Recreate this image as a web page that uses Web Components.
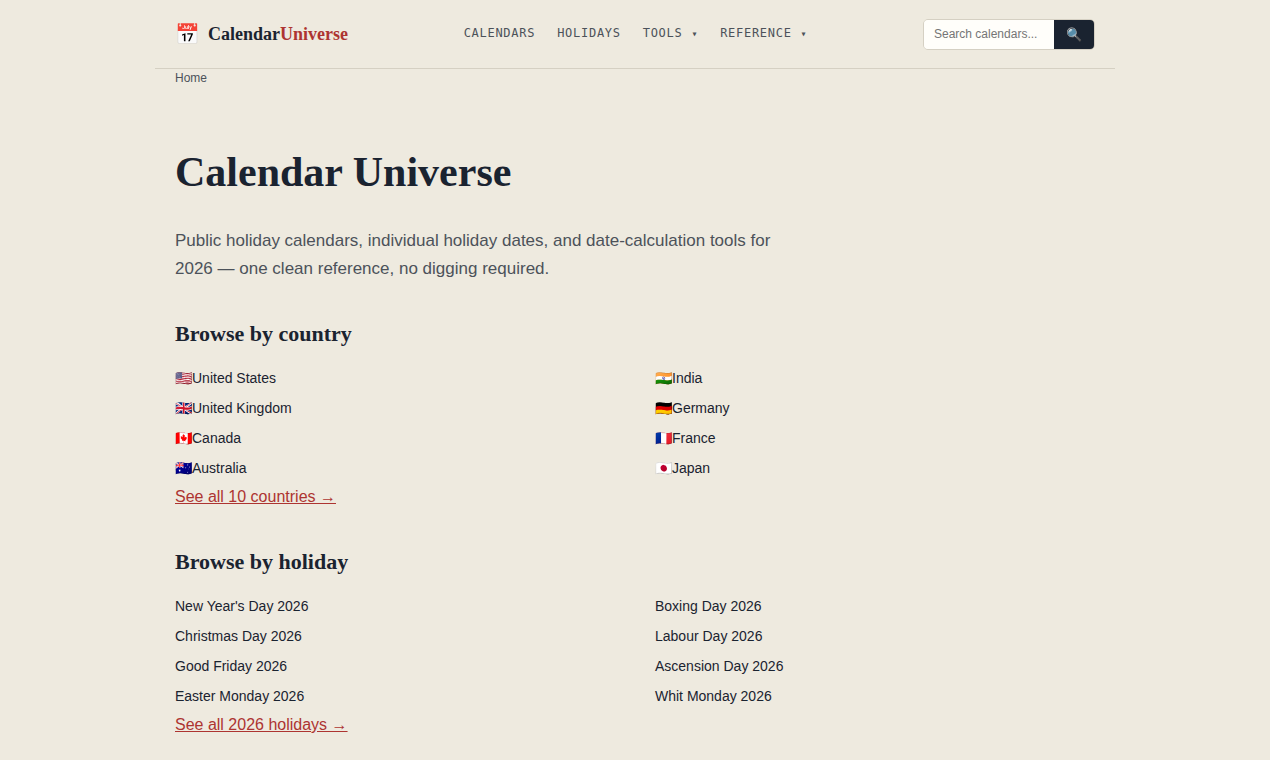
<!DOCTYPE html>
<html lang="en">
<head>
<meta charset="utf-8">
<meta name="viewport" content="width=device-width, initial-scale=1">
<title>Calendar Universe</title>
<style>
  :root {
    --paper: #eeeadf;
    --ink: #1a2330;
    --muted: #4c525a;
    --accent: #ad3431;
    --line: #d5d0c3;
    --serif: "Liberation Serif", serif;
    --sans: "Liberation Sans", sans-serif;
    --mono: "DejaVu Sans Mono", monospace;
  }
  body {
    margin: 0;
    background: var(--paper);
    color: var(--ink);
    font: 16px/26px var(--sans);
  }
</style>
</head>
<body>
<calendar-page>
  <site-header slot="header"></site-header>
  <bread-crumbs slot="crumbs">Home</bread-crumbs>
  <page-intro>
    <span slot="title">Calendar Universe</span>
    Public holiday calendars, individual holiday dates, and date-calculation tools for 2026 — one clean reference, no digging required.
  </page-intro>
  <browse-section id="countries" heading="Browse by country" more="See all 10 countries →"></browse-section>
  <browse-section id="holidays" heading="Browse by holiday" more="See all 2026 holidays →"></browse-section>
</calendar-page>

<script>
class CalendarPage extends HTMLElement {
  constructor() {
    super();
    this.attachShadow({ mode: 'open' });
    this.shadowRoot.innerHTML = `
      <style>
        :host {
          display: block;
          max-width: 960px;
          margin: 0 auto;
        }
        main {
          padding: 57px 20px 40px;
        }
      </style>
      <slot name="header"></slot>
      <slot name="crumbs"></slot>
      <main><slot></slot></main>
    `;
  }
}

class SiteHeader extends HTMLElement {
  constructor() {
    super();
    this.attachShadow({ mode: 'open' });
    this.shadowRoot.innerHTML = `
      <style>
        :host { display: block; }
        header {
          display: flex;
          align-items: center;
          justify-content: space-between;
          padding: 19px 20px 18px;
          border-bottom: 1px solid var(--line);
        }
        .brand {
          display: flex;
          align-items: center;
          gap: 8px;
          padding-bottom: 2px;
          color: var(--ink);
          font: bold 18px/28px var(--serif);
          text-decoration: none;
        }
        .brand .icon { font-size: 20px; }
        .brand b { color: var(--accent); }
        nav {
          display: flex;
          gap: 22px;
          padding-bottom: 2px;
          font: 12px/28px var(--mono);
          letter-spacing: 0.06em;
        }
        nav a {
          color: var(--muted);
          text-decoration: none;
          text-transform: uppercase;
        }
        nav small {
          margin-left: 1px;
          font-size: 10px;
        }
        form {
          display: flex;
          box-sizing: border-box;
          height: 31px;
          border: 1px solid var(--line);
          border-radius: 5px;
          overflow: hidden;
        }
        input {
          box-sizing: border-box;
          width: 130px;
          padding: 0 10px 2px;
          border: 0;
          background: #fffefa;
          color: var(--ink);
          font: 12px var(--sans);
        }
        input::placeholder { color: #757575; }
        input::-webkit-search-cancel-button { display: none; }
        button {
          width: 40px;
          padding: 0;
          border: 0;
          background: var(--ink);
          font: 13px var(--sans);
          cursor: pointer;
        }
      </style>
      <header>
        <a class="brand" href="#"><span class="icon" aria-hidden="true">📅</span><span>Calendar<b>Universe</b></span></a>
        <nav>
          <a href="#countries">Calendars</a>
          <a href="#holidays">Holidays</a>
          <a href="#tools">Tools <small>▾</small></a>
          <a href="#reference">Reference <small>▾</small></a>
        </nav>
        <form role="search">
          <input type="search" placeholder="Search calendars..." aria-label="Search calendars">
          <button type="submit" aria-label="Search">🔍</button>
        </form>
      </header>
    `;
    this.shadowRoot.querySelector('form').addEventListener('submit', (e) => e.preventDefault());
  }
}

class BreadCrumbs extends HTMLElement {
  constructor() {
    super();
    this.attachShadow({ mode: 'open' });
    this.shadowRoot.innerHTML = `
      <style>
        :host {
          display: block;
          padding: 0 20px;
          color: var(--muted);
          font-size: 12px;
          line-height: 19px;
        }
      </style>
      <slot></slot>
    `;
  }
}

class PageIntro extends HTMLElement {
  constructor() {
    super();
    this.attachShadow({ mode: 'open' });
    this.shadowRoot.innerHTML = `
      <style>
        :host { display: block; }
        h1 {
          margin: 0 0 28px;
          font: bold 42px/54px var(--serif);
        }
        p {
          max-width: 620px;
          margin: 0;
          color: var(--muted);
          font-size: 17px;
          line-height: 28px;
        }
      </style>
      <h1><slot name="title"></slot></h1>
      <p><slot></slot></p>
    `;
  }
}

class BrowseSection extends HTMLElement {
  constructor() {
    super();
    this.attachShadow({ mode: 'open' });
    this.items = [];
  }

  connectedCallback() {
    this.items = LISTS[this.id] || [];
    this.render();
  }

  render() {
    this.shadowRoot.innerHTML = `
      <style>
        :host {
          display: block;
          margin-top: 37px;
          padding-bottom: 1px;
        }
        h2 {
          margin: 0 0 15px;
          font: bold 22px/28px var(--serif);
        }
        ul {
          display: grid;
          grid-template-columns: 1fr 1fr;
          grid-template-rows: repeat(4, auto);
          grid-auto-flow: column;
          column-gap: 40px;
          margin: 0 0 1px;
          padding: 0;
          list-style: none;
        }
        li {
          font-size: 14px;
          line-height: 30px;
        }
        li a {
          display: flex;
          color: var(--ink);
          text-decoration: none;
        }
        .more { color: var(--accent); }
      </style>
      <h2>${this.getAttribute('heading')}</h2>
      <ul>
        ${this.items.map(
          ([name, flag]) => `<li><a href="#">${flag ? `<span>${flag}</span>` : ''}${name}</a></li>`
        ).join('')}
      </ul>
      <a class="more" href="#">${this.getAttribute('more')}</a>
    `;
  }
}

// Items run down the first column, then down the second
const LISTS = {
  countries: [
    ['United States', '🇺🇸'],
    ['United Kingdom', '🇬🇧'],
    ['Canada', '🇨🇦'],
    ['Australia', '🇦🇺'],
    ['India', '🇮🇳'],
    ['Germany', '🇩🇪'],
    ['France', '🇫🇷'],
    ['Japan', '🇯🇵']
  ],
  holidays: [
    ["New Year's Day 2026"],
    ['Christmas Day 2026'],
    ['Good Friday 2026'],
    ['Easter Monday 2026'],
    ['Boxing Day 2026'],
    ['Labour Day 2026'],
    ['Ascension Day 2026'],
    ['Whit Monday 2026']
  ]
};

customElements.define('calendar-page', CalendarPage);
customElements.define('site-header', SiteHeader);
customElements.define('bread-crumbs', BreadCrumbs);
customElements.define('page-intro', PageIntro);
customElements.define('browse-section', BrowseSection);
</script>
</body>
</html>
